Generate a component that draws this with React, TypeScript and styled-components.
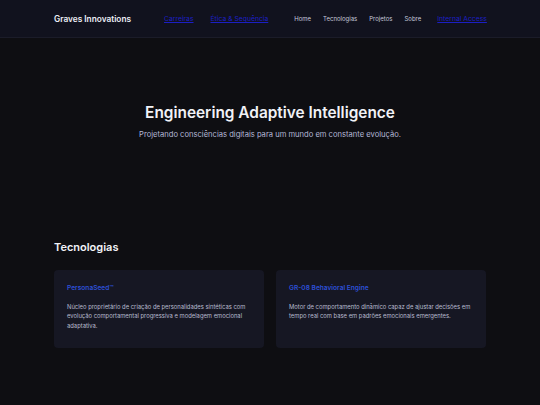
import React from 'react'
import styled, { createGlobalStyle } from 'styled-components'

const GlobalStyle = createGlobalStyle`
  html, body {
    margin: 0;
    padding: 0;
    background: #0e0e12;
    font-family: Inter, 'Noto Sans', sans-serif;
    color: #e8e9f0;
  }
`

const Header = styled.header`
  height: 38px;
  background: #11121e;
  border-bottom: 1px solid #1b1c29;
  box-sizing: border-box;
`

const HeaderInner = styled.div`
  width: 432px;
  height: 100%;
  margin: 0 auto;
  display: flex;
  align-items: center;
  white-space: nowrap;

  & > * {
    flex-shrink: 0;
  }
`

const Brand = styled.div`
  font-size: 8.3px;
  font-weight: 600;
  color: #eceef5;
`

const RawLink = styled.a<{ $gap: number }>`
  font-size: 6.8px;
  color: #1c1fc4;
  text-decoration: underline;
  margin-left: ${({ $gap }) => $gap}px;
`

const NavList = styled.nav`
  display: flex;
  align-items: center;
  gap: 12px;
  margin-left: 26px;
`

const NavItem = styled.a`
  font-size: 6px;
  color: #c6c9dc;
  text-decoration: none;
`

const Hero = styled.section`
  padding-top: 65px;
  display: flex;
  flex-direction: column;
  align-items: center;
`

const Title = styled.h1`
  margin: 0;
  font-size: 15.4px;
  line-height: 20px;
  font-weight: 600;
  color: #f1f2f7;
`

const Subtitle = styled.p`
  margin: 7px 0 0;
  font-size: 7.6px;
  line-height: 10px;
  color: #b4b8d6;
`

const Section = styled.section`
  width: 432px;
  margin: 99px auto 0;
`

const SectionTitle = styled.h2`
  margin: 0;
  font-size: 11px;
  line-height: 16px;
  font-weight: 600;
  color: #f1f2f7;
`

const CardGrid = styled.div`
  margin-top: 15px;
  display: grid;
  grid-template-columns: 1fr 1fr;
  gap: 12px;
`

const Card = styled.div`
  background: #161723;
  border-radius: 4px;
  height: 78px;
  box-sizing: border-box;
  padding: 14px 13px;
`

const CardTitle = styled.h3`
  margin: 0;
  font-size: 6.6px;
  line-height: 9px;
  font-weight: 600;
  color: #2d4fd6;
`

const CardText = styled.p`
  margin: 8.5px 0 0;
  font-size: 5.85px;
  line-height: 9.5px;
  color: #b8bbcf;
`

const cards = [
  {
    title: 'PersonaSeed™',
    text: 'Núcleo proprietário de criação de personalidades sintéticas com evolução comportamental progressiva e modelagem emocional adaptativa.',
  },
  {
    title: 'GR-08 Behavioral Engine',
    text: 'Motor de comportamento dinâmico capaz de ajustar decisões em tempo real com base em padrões emocionais emergentes.',
  },
]

export default function App() {
  return (
    <>
      <GlobalStyle />
      <Header>
        <HeaderInner>
          <Brand>Graves Innovations</Brand>
          <RawLink href="#" $gap={33}>Carreiras</RawLink>
          <RawLink href="#" $gap={17}>Ética &amp; Sequência</RawLink>
          <NavList>
            <NavItem href="#">Home</NavItem>
            <NavItem href="#">Tecnologias</NavItem>
            <NavItem href="#">Projetos</NavItem>
            <NavItem href="#">Sobre</NavItem>
            <RawLink href="#" $gap={4}>Internal Access</RawLink>
          </NavList>
        </HeaderInner>
      </Header>
      <Hero>
        <Title>Engineering Adaptive Intelligence</Title>
        <Subtitle>Projetando consciências digitais para um mundo em constante evolução.</Subtitle>
      </Hero>
      <Section>
        <SectionTitle>Tecnologias</SectionTitle>
        <CardGrid>
          {cards.map((c) => (
            <Card key={c.title}>
              <CardTitle>{c.title}</CardTitle>
              <CardText>{c.text}</CardText>
            </Card>
          ))}
        </CardGrid>
      </Section>
    </>
  )
}
